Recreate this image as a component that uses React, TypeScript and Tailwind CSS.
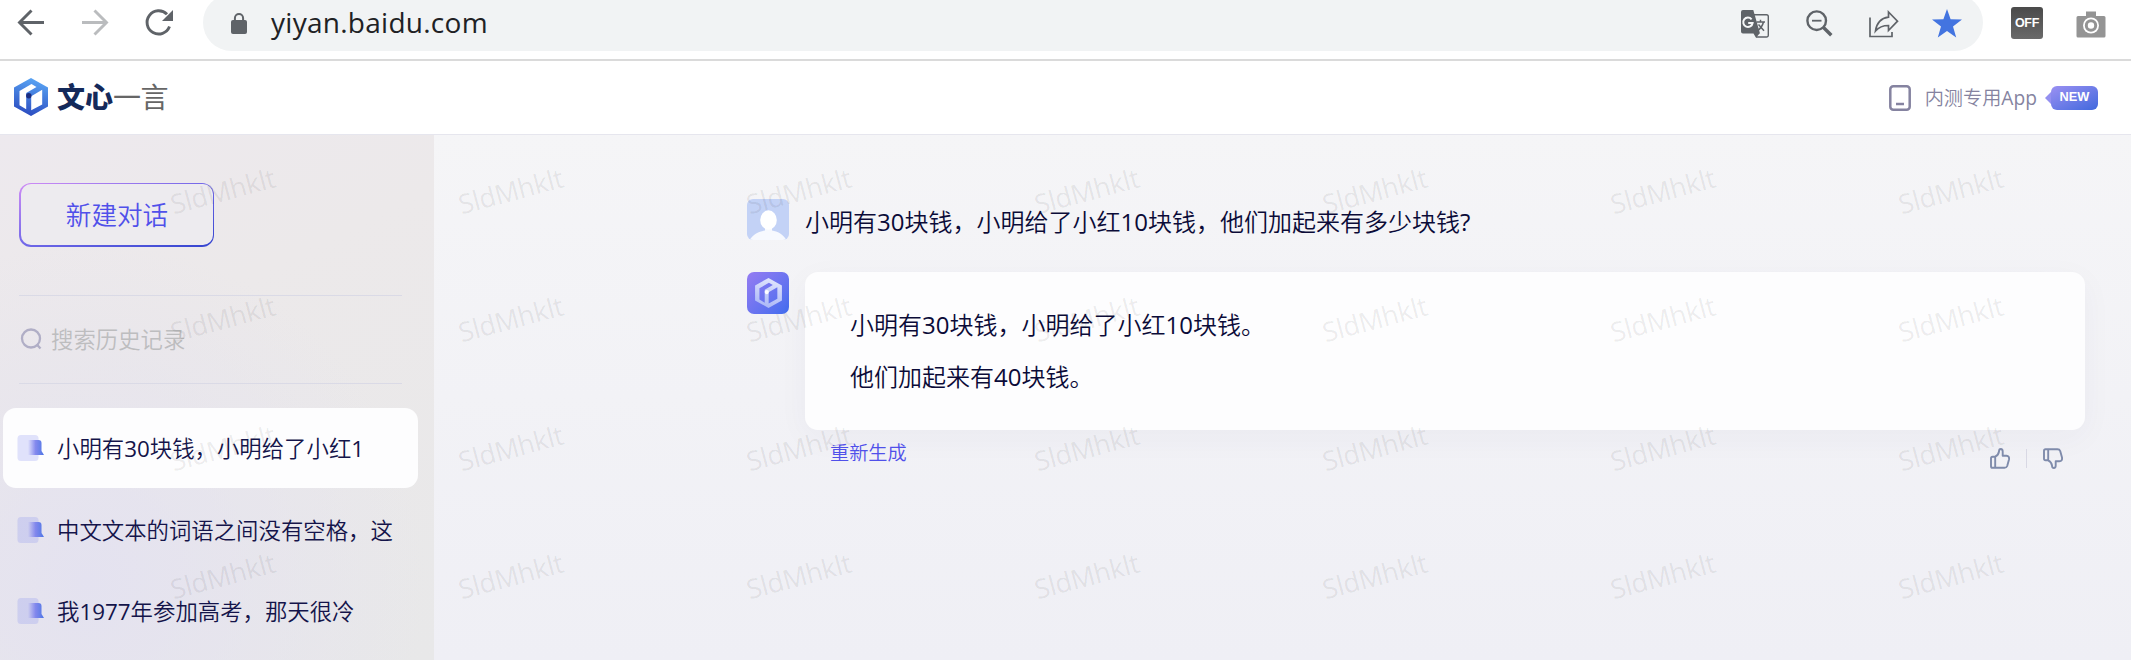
import { useId } from "react";

type CubeProps = { from: string; to: string; dot: string; className: string };

function CubeLogo({ from, to, dot, className }: CubeProps) {
  const id = useId();
  return (
    <svg viewBox="0 0 34 38" className={className} fill="none">
      <defs>
        <linearGradient id={id} x1="22" y1="0" x2="12" y2="38" gradientUnits="userSpaceOnUse">
          <stop stopColor={from} />
          <stop offset="1" stopColor={to} />
        </linearGradient>
      </defs>
      <path
        fillRule="evenodd"
        fill={`url(#${id})`}
        d="M17 0L34 9.4V28.4L17 38L0 28.4V9.4ZM5.500 13L17.500 6.100L22.500 8.900L12.200 15V31.200L5.500 27.200ZM17.200 18.200L28.200 11.800V26.400L17.200 32.200Z"
      />
      <circle cx="14.8" cy="17.8" r="2.7" fill={dot} />
    </svg>
  );
}

function TranslateIcon() {
  return (
    <svg viewBox="0 0 28 28" className="h-[28px] w-[28px]" fill="none">
      <path d="M13 4.7H25.500a1.800 1.800 0 0 1 1.800 1.800V25.200a1.800 1.800 0 0 1-1.800 1.800H15" stroke="#5f6368" strokeWidth="1.400" />
      <path d="M2 0H12.300L19 23.500H2a2 2 0 0 1-2-2V2a2 2 0 0 1 2-2ZM12.500 23.500H18.500L15 27.700Z" fill="#5f6368" />
      <path d="M10.600 9.300A4.700 4.700 0 1 0 11.600 13H7.200" stroke="#f6f7f8" strokeWidth="2" />
      <path d="M15.500 12H24M19.500 9.800V12M22.500 12C21.500 16 19 19 16.500 20.500M17.500 14.500L23 20.800" stroke="#5f6368" strokeWidth="1.500" />
    </svg>
  );
}

function ZoomOutIcon() {
  return (
    <svg viewBox="0 0 27 27" className="h-[27px] w-[27px]" fill="none" stroke="#5f6368">
      <circle cx="10.700" cy="10.700" r="9.300" strokeWidth="2.400" />
      <path d="M6 10.700H15.500" strokeWidth="1.800" />
      <path d="M17 17L25.300 25.300" strokeWidth="3.400" />
    </svg>
  );
}

function ShareIcon() {
  return (
    <svg viewBox="0 0 30 28" className="h-[28px] w-[30px]" fill="none" stroke="#5f6368" strokeWidth="1.700">
      <path d="M1 7.500V26.500H23V22" />
      <path d="M19.500 2L28.500 11.200L19.500 20.500V15.500C13.500 15.500 9.500 17.500 6.500 21C7.500 14 11.500 8.300 19.500 7.200Z" />
    </svg>
  );
}

function CameraIcon() {
  return (
    <svg viewBox="0 0 30 28" className="h-[28px] w-[30px]">
      <path d="M10 1.500H20V6H28a1.500 1.500 0 0 1 1.500 1.500V26a1.500 1.500 0 0 1-1.500 1.500H2A1.500 1.500 0 0 1 .5 26V7.500A1.500 1.500 0 0 1 2 6H10Z" fill="#949494" />
      <circle cx="15" cy="15.500" r="8" fill="#fff" />
      <circle cx="15" cy="15.500" r="4.700" fill="none" stroke="#949494" strokeWidth="3" />
    </svg>
  );
}

function Toolbar() {
  return (
    <div className="flex h-[61px] shrink-0 items-start border-b-2 border-[#dadada] bg-white">
      <svg viewBox="0 0 203 46" className="h-[46px] w-[203px] shrink-0" fill="none" strokeWidth="2.9">
        <path d="M44 22.500H20M31.500 10.500L19.500 22.500L31.500 34.500" stroke="#5f6368" />
        <path d="M82 22.500H106M94.500 10.500L106.500 22.500L94.500 34.500" stroke="#babcbe" />
        <path d="M169.500 26.500A11.600 11.600 0 1 1 167 14.300" stroke="#5f6368" />
        <path d="M173 10V21H162Z" fill="#5f6368" />
      </svg>
      <div className="-mt-[6px] flex h-[57px] w-[1780px] shrink-0 items-center rounded-full bg-[#f1f3f4] pr-[21px] pl-[28px]">
        <svg viewBox="0 0 16 21" className="mt-[2px] h-[21px] w-[16px]" fill="none">
          <rect y="7" width="16" height="14" rx="2" fill="#5f6368" />
          <path d="M3.900 8V5.200a4.100 4.100 0 0 1 8.200 0V8" stroke="#5f6368" strokeWidth="2" />
        </svg>
        <span className="-mt-[2px] ml-[24px] font-['Open_Sans',sans-serif] text-[28px] leading-none tracking-[0.27px] text-[#202124]">
          yiyan.baidu.com
        </span>
        <div className="mt-[2px] ml-auto flex items-center">
          <TranslateIcon />
          <div className="ml-[37px]"><ZoomOutIcon /></div>
          <div className="ml-[36px]"><ShareIcon /></div>
          <svg viewBox="0 0 30 29" className="ml-[33px] h-[29px] w-[30px]">
            <path d="M15 0L18.600 10.300L30 10.600L21 17.600L24.200 28.500L15 22L5.800 28.500L9 17.600L0 10.600L11.400 10.300Z" fill="#4374e0" />
          </svg>
        </div>
      </div>
      <div className="mt-[7px] ml-[28px] flex h-[32px] w-[32px] items-center justify-center rounded-[3px] bg-linear-to-b from-[#4a4a4a] to-[#6a6a6a] font-['Liberation_Sans',sans-serif] text-[12.5px] leading-none font-bold tracking-[-0.3px] text-white">
        OFF
      </div>
      <div className="mt-[10px] ml-[33px]"><CameraIcon /></div>
    </div>
  );
}

function SiteHeader() {
  return (
    <header className="flex h-[74px] shrink-0 items-center border-b border-[#e6e6ee] bg-white pr-[33px] pl-[14px]">
      <CubeLogo from="#5aa6f5" to="#2a4abf" dot="#1b2d80" className="-mt-px h-[38px] w-[34px]" />
      <div className="-mt-[4px] ml-[9px] flex items-center font-['Noto_Sans_CJK_SC',sans-serif] text-[28px] leading-none">
        <span className="font-black text-[#14295a]">文心</span>
        <span className="text-[#666] tracking-[-0.5px]">一言</span>
      </div>
      <svg viewBox="0 0 22 26" className="ml-auto h-[26px] w-[22px]" fill="none" stroke="#8583a0">
        <rect x="1.300" y="1.300" width="19.400" height="23.400" rx="3" strokeWidth="2.500" />
        <path d="M7 19H15" strokeWidth="2.500" />
      </svg>
      <span className="mt-px ml-[14px] text-[19.2px] leading-none text-[#8583a0]">内测专用App</span>
      <div className="ml-[8px] flex items-center">
        <svg viewBox="0 0 6 12" className="h-[12px] w-[6px]"><path d="M6 0V12L0 6Z" fill="#9490f0" /></svg>
        <div className="flex h-[24px] w-[47px] items-center justify-center rounded-[6px] bg-linear-to-br from-[#9a90f2] to-[#3f68dd] font-['Liberation_Sans',sans-serif] text-[12.8px] leading-none font-bold text-white">
          NEW
        </div>
      </div>
    </header>
  );
}

function HistoryIcon() {
  const id = useId();
  return (
    <svg viewBox="0 0 28 28" className="h-[28px] w-[28px] shrink-0">
      <defs>
        <linearGradient id={id} x1="11" y1="0" x2="26" y2="0" gradientUnits="userSpaceOnUse">
          <stop stopColor="#7f80ee" stopOpacity="0" />
          <stop offset="0.500" stopColor="#7a80ec" stopOpacity="0.9" />
          <stop offset="1" stopColor="#5277e6" />
        </linearGradient>
      </defs>
      <rect x="0.500" y="1" width="21" height="26" rx="3.500" fill="#7d86f0" fillOpacity="0.22" />
      <path d="M11 6H21.500Q24.500 6 24.500 9V17L27 21H11Z" fill={`url(#${id})`} />
    </svg>
  );
}

function HistoryItem({ title, active = false }: { title: string; active?: boolean }) {
  return (
    <li className={`flex h-[80px] items-center rounded-[13px] pl-[14px] ${active ? "bg-[#fdfdfe]" : ""}`}>
      <HistoryIcon />
      <span className="mt-[3px] ml-[12px] text-[22.4px] leading-none whitespace-nowrap">{title}</span>
    </li>
  );
}

function Sidebar() {
  return (
    <aside className="w-[434px] shrink-0 bg-[radial-gradient(circle_at_20%_85%,#e4e2f0_0%,transparent_60%),linear-gradient(155deg,#ede9ee_0%,#ece9ea_35%,#e8e8e9_100%)] text-[#14144a]">
      <div className="px-[19px]">
        <div className="h-[48px]" />
        <div className="h-[64px] w-[195px] rounded-[12px] bg-linear-to-br from-[#d08cf5] via-[#7067e8] to-[#3444cf] pt-px pr-px pb-[2px] pl-[2px]">
          <button className="flex h-full w-full items-center justify-center rounded-[10px] bg-[#edebef] pt-[3px] text-[25.6px] leading-none text-[#5050ea]">
            新建对话
          </button>
        </div>
        <div className="mt-[48px] flex h-[89px] w-[383px] items-center border-y border-[#dadae6]">
          <svg viewBox="0 0 24 24" className="ml-[1px] h-[24px] w-[24px]" fill="none" stroke="#b0aec6" strokeWidth="2.300">
            <circle cx="11" cy="10.500" r="9" />
            <path d="M16.800 16.500L20.500 20.500" />
          </svg>
          <span className="mt-[2px] ml-[7px] text-[22.4px] leading-none text-[#bdbdbf]">搜索历史记录</span>
        </div>
      </div>
      <ul className="mt-[24px] ml-[3px] flex w-[415px] flex-col gap-[1.500px]">
        <HistoryItem title="小明有30块钱，小明给了小红1" active />
        <HistoryItem title="中文文本的词语之间没有空格，这" />
        <HistoryItem title="我1977年参加高考，那天很冷" />
      </ul>
    </aside>
  );
}

function Thumb({ className }: { className: string }) {
  return (
    <svg viewBox="0 0 20 21" className={className} fill="none" stroke="#7f8bab" strokeWidth="1.900" strokeLinejoin="round">
      <path d="M5.200 8.700H2.500Q1 8.700 1 10.200V18.200Q1 19.800 2.500 19.800H14.500Q16.500 19.800 17.200 18L19 11.500Q19.500 8 16.500 7.800H12.700V3.500Q12.700 1 10.800 1Q9 1 9 3.500Q8.500 7 5.200 8.700ZM5.200 8.700V19.800" />
    </svg>
  );
}

function Conversation() {
  return (
    <main className="flex-1 bg-linear-to-b from-[#f5f5f7] via-[#f2f2f6] to-[#efeff5] pl-[313px] text-[#0b0b38]">
      <div className="flex pt-[64px]">
        <svg viewBox="0 0 42 42" className="h-[42px] w-[42px] shrink-0">
          <defs>
            <clipPath id="avatarClip"><rect width="42" height="41" rx="6" /></clipPath>
          </defs>
          <g clipPath="url(#avatarClip)">
            <rect width="42" height="42" fill="#c3d2f6" />
            <path d="M2 42C6 35 12 32.500 18 31.500V28H25V31.500C31 32.500 36 35 40 42Z" fill="#f7f9fe" />
            <ellipse cx="21.500" cy="21" rx="8.300" ry="9.700" fill="#fff" />
          </g>
        </svg>
        <p className="mt-[11px] ml-[16px] text-[24px] leading-none">
          小明有30块钱，小明给了小红10块钱，他们加起来有多少块钱?
        </p>
      </div>
      <div className="mt-[31px] flex">
        <div className="flex h-[42px] w-[42px] shrink-0 items-center justify-center rounded-[7px] bg-linear-to-br from-[#957cf2] to-[#3f6cee]">
          <CubeLogo from="#e2e6fd" to="#a9b6f6" dot="#ffffff" className="h-[30px] w-[27px]" />
        </div>
        <div className="ml-[16px] w-[1280px]">
          <div className="flex h-[158px] flex-col rounded-[13px] bg-[#fdfdfe] pt-[27px] pl-[45px] text-[24px] leading-[52px] shadow-[0_8px_32px_rgba(50,50,110,0.04)]">
            <p>小明有30块钱，小明给了小红10块钱。</p>
            <p>他们加起来有40块钱。</p>
          </div>
          <div className="flex items-start pr-[22px] pl-[25px]">
            <button className="mt-[13px] text-[19.2px] leading-none text-[#5050ea]">重新生成</button>
            <div className="mt-[18px] ml-auto flex items-center">
              <Thumb className="h-[21px] w-[20px]" />
              <div className="mr-[16px] ml-[16px] h-[19px] w-px bg-[#d8d8e4]" />
              <Thumb className="h-[21px] w-[20px] -scale-y-100" />
            </div>
          </div>
        </div>
      </div>
    </main>
  );
}

const MARKS = Array.from({ length: 28 }, (_, i) => i);

function Watermark() {
  return (
    <div className="pointer-events-none absolute top-0 left-[169px] grid w-[2016px] grid-cols-7 pt-[24px]">
      {MARKS.map((i) => (
        <div key={i} className="flex h-[128.3px] items-start">
          <span className="mt-[17px] block origin-center -rotate-[15deg] font-['Open_Sans',sans-serif] text-[27px] leading-[30px] tracking-[-0.3px] text-black/8">
            SldMhklt
          </span>
        </div>
      ))}
    </div>
  );
}

export default function App() {
  return (
    <div className="flex h-[660px] w-[2131px] flex-col overflow-hidden bg-white font-['Open_Sans','Noto_Sans_CJK_SC_DemiLight','Noto_Sans_CJK_SC',sans-serif] font-normal">
      <Toolbar />
      <SiteHeader />
      <div className="relative flex min-h-0 flex-1 overflow-hidden">
        <Sidebar />
        <Conversation />
        <Watermark />
      </div>
    </div>
  );
}
